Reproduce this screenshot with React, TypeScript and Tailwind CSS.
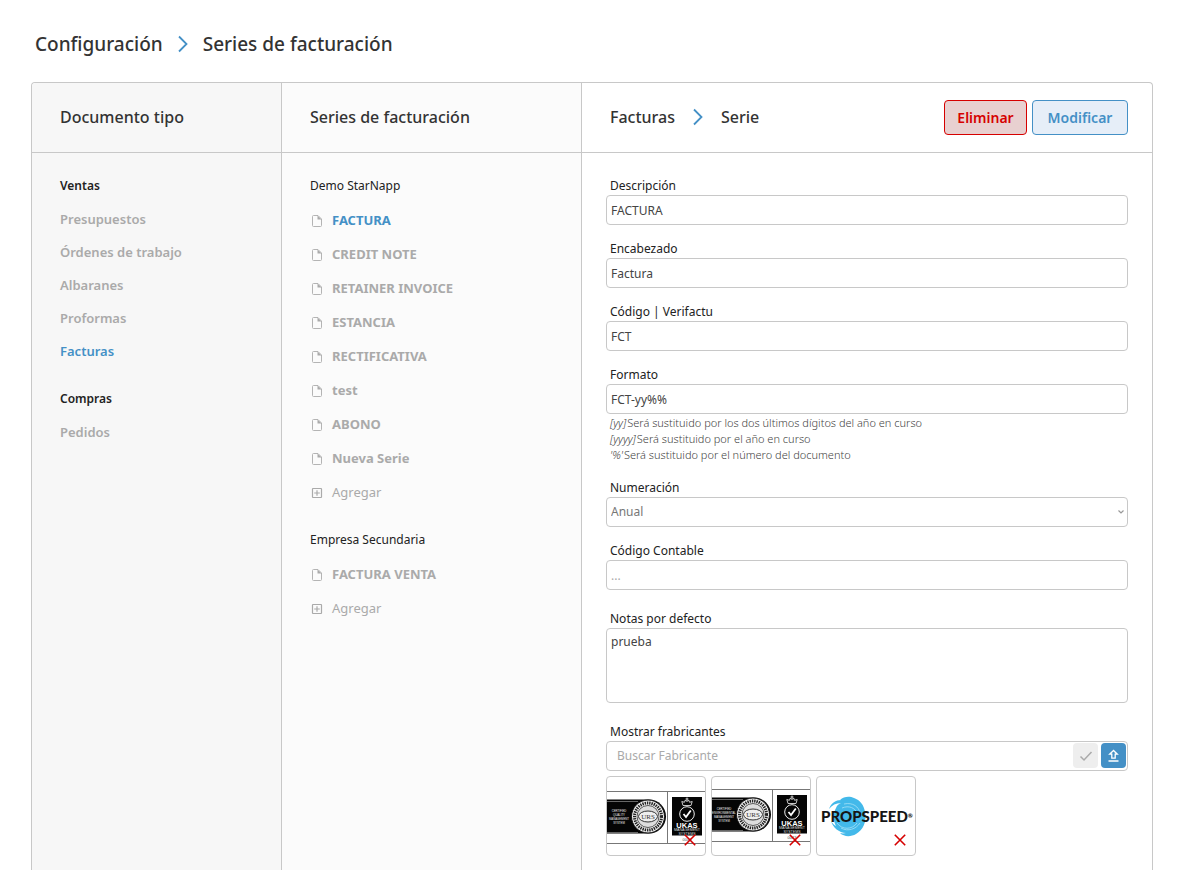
import { useState } from 'react';

interface SeriesGroup {
  company: string;
  series: string[];
}

const documentGroups = [
  { title: 'Ventas', items: ['Presupuestos', 'Órdenes de trabajo', 'Albaranes', 'Proformas', 'Facturas'] },
  { title: 'Compras', items: ['Pedidos'] },
];

const seriesGroups: SeriesGroup[] = [
  {
    company: 'Demo StarNapp',
    series: ['FACTURA', 'CREDIT NOTE', 'RETAINER INVOICE', 'ESTANCIA', 'RECTIFICATIVA', 'test', 'ABONO', 'Nueva Serie'],
  },
  { company: 'Empresa Secundaria', series: ['FACTURA VENTA'] },
];

const inputClass = 'block h-[30px] w-full rounded border border-[#c8c8c8] bg-white px-1 text-xs outline-none placeholder:text-[#aaa]';

const Chevron = ({ className }: { className: string }) => (
  <svg className={className} viewBox="0 0 12 18" fill="none" stroke="#4490c6" strokeWidth="1.8" aria-hidden="true">
    <path d="M2 1.500 9.500 9 2 16.500" />
  </svg>
);

const FileIcon = () => (
  <svg className="size-[14px] shrink-0" viewBox="0 0 14 14" aria-hidden="true">
    <path d="M3.500 1.500h4.500l3.500 3.500v6.500a1 1 0 0 1-1 1h-7a1 1 0 0 1-1-1v-9a1 1 0 0 1 1-1z" fill="none" stroke="#b4b4b4" />
    <path d="M7.500 1.500V5.500h4z" fill="#aaa" />
  </svg>
);

const AddIcon = () => (
  <svg className="size-[14px] shrink-0" viewBox="0 0 14 14" fill="none" stroke="#aaa" aria-hidden="true">
    <rect x="2.500" y="2.500" width="9" height="9" rx="0.500" strokeWidth="1.200" />
    <path d="M7 4.200v5.600M4.200 7h5.600" strokeWidth="1.200" />
  </svg>
);

const CertLogo = ({ lines, top }: { lines: string[]; top: number }) => (
  <svg className="size-full" viewBox="0 0 98 78" role="img" aria-label="URS UKAS">
    <g transform={`translate(0 ${top})`} fontFamily="Liberation Sans, Arial, sans-serif">
      <path d="M0 .5h98M0 52.500h98M60.500 0v53" stroke="#777" fill="none" />
      <path d="M0 8.500h42a17 17 0 0 1 0 34H0z" fill="#050505" />
      <path d="M0 10.500h31M0 41.500h31" stroke="#aaa" strokeWidth="0.600" />
      {lines.map((line, i) => (
        <text key={line} x="12" y={21 + i * 4} fontSize="2.800" fill="#eee" textAnchor="middle">
          {line}
        </text>
      ))}
      <circle cx="41" cy="25.500" r="16.500" fill="#eee" stroke="#111" />
      <circle cx="41" cy="25.500" r="13.500" fill="none" stroke="#222" strokeWidth="3" strokeDasharray="1.400 0.900" />
      <circle cx="41" cy="25.500" r="11" fill="#ddd" stroke="#333" strokeWidth="0.800" />
      <ellipse cx="41" cy="25.500" rx="9.500" ry="5.500" fill="#eee" stroke="#333" />
      <text x="41" y="28" fontSize="7" fontFamily="Liberation Serif, serif" fill="#333" textAnchor="middle">
        URS
      </text>
      <path d="M65 6h30v38.500H65z" fill="#050505" />
      <path
        d="M76 14.500h8l1.200-4-2.600.8-1-2.300-1.600 1.700-1.600-1.700-1 2.300-2.600-.8zM80 6.500V10M78.500 8h3"
        fill="none"
        stroke="#ddd"
        strokeWidth="0.900"
      />
      <circle cx="80" cy="23" r="7.300" fill="none" stroke="#eee" />
      <path d="m76.500 23 2.500 3 4.800-6.500" fill="none" stroke="#fff" strokeWidth="1.800" />
      <text x="80" y="36.500" fontSize="7.500" fontWeight="700" fill="#fff" textAnchor="middle">
        UKAS
      </text>
      <text x="80" y="40.200" fontSize="3.600" fill="#ddd" textAnchor="middle">
        MANAGEMENT
      </text>
      <text x="80" y="43.700" fontSize="3.600" fill="#ddd" textAnchor="middle">
        SYSTEMS
      </text>
      <text x="80" y="50" fontSize="4" fill="#555" textAnchor="middle">
        0043
      </text>
    </g>
  </svg>
);

const PropspeedLogo = () => (
  <svg className="size-full" viewBox="0 0 98 78" role="img" aria-label="Propspeed">
    <g transform="translate(5 0)">
      <path
        d="M18 23c4-4 10-4 14-2 6 2 10 7 11 14 2 10-2 18-9 22-5 3-12 3-16-1 2 .5 4 .5 6 0-7-.5-13-5-15-12 2 3 3 4 5 5-3-5-3-13 0-18 1-3 3-4 5-5-5 0-9 2-12 6 2-6 7-9 12-9z"
        fill="#43b9ea"
      />
      <path
        d="M22 27c9-2 15 3 16 9M20 31c7-3 13 0 15 5M15 46c5 7 15 7 20 0M19 51c7 4 15 1 19-5"
        fill="none"
        stroke="#9bdcf5"
        strokeWidth="0.900"
      />
    </g>
    <text x="4" y="45" fontSize="15" fontWeight="900" fontFamily="Lato, sans-serif" fill="#151515">
      PROPSPEED
      <tspan fontSize="6" dy="-4">
        ®
      </tspan>
    </text>
  </svg>
);

interface FieldProps {
  id: string;
  label: string;
  children: React.ReactNode;
}

const Field = ({ id, label, children }: FieldProps) => (
  <div>
    <label htmlFor={id} className="block pt-[2px] pl-1 text-xs leading-[18px] text-[#222]">
      {label}
    </label>
    {children}
  </div>
);

const manufacturers = [
  { name: 'URS Quality', logo: <CertLogo top={14} lines={['CERTIFIED', 'QUALITY', 'MANAGEMENT', 'SYSTEM']} /> },
  { name: 'URS Environmental', logo: <CertLogo top={12} lines={['CERTIFIED', 'ENVIRONMENTAL', 'MANAGEMENT', 'SYSTEM']} /> },
  { name: 'Propspeed', logo: <PropspeedLogo /> },
];

const App = () => {
  const [docType, setDocType] = useState('Facturas');
  const [serie, setSerie] = useState('FACTURA');

  return (
    <div className="min-h-screen bg-white pr-6 pl-[31px] font-['Noto_Sans',sans-serif] text-[#333]">
      <h1 className="flex h-[82px] items-center gap-[14px] pt-[6px] pl-1 text-[19px] font-medium">
        <span>Configuración</span>
        <Chevron className="h-[18px] w-3" />
        <span>Series de facturación</span>
      </h1>

      <main className="grid min-h-[800px] grid-cols-[250px_300px_1fr] rounded-t border border-b-0 border-[#c8c8c8]">
        <nav className="rounded-tl border-r border-[#c8c8c8] bg-[#f7f7f7]" aria-label="Documento tipo">
          <h2 className="flex h-[70px] items-center border-b border-[#c8c8c8] px-7 pb-[2px] text-base font-medium">Documento tipo</h2>
          <div className="flex flex-col gap-5 px-7 pt-[22px]">
            {documentGroups.map((group) => (
              <section key={group.title}>
                <h3 className="mb-2 pt-[2px] text-xs leading-[18px] font-semibold text-[#222]">{group.title}</h3>
                {group.items.map((item) => (
                  <button
                    key={item}
                    type="button"
                    onClick={() => setDocType(item)}
                    className={`block h-[33px] text-[13px] font-semibold ${item === docType ? 'text-[#4490c6]' : 'text-[#aaa]'}`}
                  >
                    {item}
                  </button>
                ))}
              </section>
            ))}
          </div>
        </nav>

        <section className="border-r border-[#c8c8c8] bg-[#fbfbfb]">
          <h2 className="flex h-[70px] items-center border-b border-[#c8c8c8] px-7 pb-[2px] text-base font-medium">Series de facturación</h2>
          <div className="flex flex-col gap-5 px-7 pt-[23px]">
            {seriesGroups.map((group) => (
              <section key={group.company}>
                <h3 className="mb-2 text-xs leading-5 text-[#222]">{group.company}</h3>
                {group.series.map((item) => (
                  <button
                    key={item}
                    type="button"
                    onClick={() => setSerie(item)}
                    className={`flex h-[34px] items-center gap-2 text-[13px] font-bold ${item === serie ? 'text-[#4490c6]' : 'text-[#aaa]'}`}
                  >
                    <FileIcon />
                    {item}
                  </button>
                ))}
                <button type="button" className="flex h-[34px] items-center gap-2 text-[13px] text-[#aaa]">
                  <AddIcon />
                  Agregar
                </button>
              </section>
            ))}
          </div>
        </section>

        <section>
          <header className="flex h-[70px] items-center justify-between border-b border-[#c8c8c8] pr-6 pl-7">
            <h2 className="flex items-center gap-[17px] pb-[2px] text-base font-medium">
              <span>Facturas</span>
              <Chevron className="h-[18px] w-3" />
              <span>Serie</span>
            </h2>
            <div className="flex gap-[5px] text-sm font-semibold">
              <button type="button" className="h-[35px] w-[83px] rounded border border-[#d60000] bg-[#e8d0d0] text-[#d60000]">
                Eliminar
              </button>
              <button type="button" className="h-[35px] w-24 rounded border border-[#4490c6] bg-[#e6eef8] text-[#4490c6]">
                Modificar
              </button>
            </div>
          </header>

          <form className="px-6 pt-[22px]">
            <div className="flex flex-col gap-[13px]">
              <Field id="descripcion" label="Descripción">
                <input id="descripcion" className={`${inputClass} text-[#444]`} defaultValue="FACTURA" />
              </Field>
              <Field id="encabezado" label="Encabezado">
                <input id="encabezado" className={`${inputClass} text-[#444]`} defaultValue="Factura" />
              </Field>
              <Field id="codigo" label="Código | Verifactu">
                <input id="codigo" className={`${inputClass} text-[#444]`} defaultValue="FCT" />
              </Field>
              <Field id="formato" label="Formato">
                <input id="formato" className={`${inputClass} text-[#444]`} defaultValue="FCT-yy%%" />
                <div className="pt-px pb-px pl-1 text-[11px] leading-4 font-light text-[#444]">
                  <p>
                    <em className="mr-px">[yy]</em>Será sustituido por los dos últimos dígitos del año en curso
                  </p>
                  <p>
                    <em className="mr-px">[yyyy]</em>Será sustituido por el año en curso
                  </p>
                  <p>
                    <em className="mr-px">'%'</em>Será sustituido por el número del documento
                  </p>
                </div>
              </Field>
              <Field id="numeracion" label="Numeración">
                <div className="relative">
                  <select id="numeracion" className={`${inputClass} appearance-none text-[#777]`} defaultValue="Anual">
                    <option>Anual</option>
                    <option>Mensual</option>
                  </select>
                  <svg
                    className="pointer-events-none absolute top-[11px] right-1 h-2 w-[6px]"
                    viewBox="0 0 6 8"
                    fill="none"
                    stroke="#999"
                    strokeWidth="1.200"
                    aria-hidden="true"
                  >
                    <path d="m.5 2.500 2.500 2.500 2.500-2.500" />
                  </svg>
                </div>
              </Field>
              <Field id="contable" label="Código Contable">
                <input id="contable" className={`${inputClass} text-[#444]`} placeholder="..." />
              </Field>
            </div>

            <div className="mt-[18px] flex flex-col gap-[18px]">
              <Field id="notas" label="Notas por defecto">
                <textarea
                  id="notas"
                  className="block h-[75px] w-full resize-none rounded border border-[#c8c8c8] px-1 py-[5px] text-xs text-[#444] outline-none"
                  defaultValue="prueba"
                />
              </Field>
              <Field id="fabricante" label="Mostrar frabricantes">
                <div className="flex h-[30px] items-center gap-[3px] rounded border border-[#c8c8c8] pr-px pb-px pl-[10px]">
                  <input
                    id="fabricante"
                    className="min-w-0 flex-1 text-xs outline-none placeholder:text-[#aaa]"
                    placeholder="Buscar Fabricante"
                  />
                  <button type="button" aria-label="Confirmar" className="flex size-[25px] items-center justify-center rounded bg-[#eee]">
                    <svg className="h-3 w-[14px]" viewBox="0 0 14 12" fill="none" stroke="#aaa" strokeWidth="1.500">
                      <path d="m1.500 6.500 3.500 3.500 7.500-8" />
                    </svg>
                  </button>
                  <button type="button" aria-label="Subir" className="flex size-[25px] items-center justify-center rounded bg-[#4490c6]">
                    <svg className="size-[13px]" viewBox="0 0 13 13" fill="none" stroke="#fff" strokeWidth="1.300">
                      <path d="M6.500 1.500 2.700 5.200h2.100v3.900h3.400V5.200h2.100zM1.500 12h10" />
                    </svg>
                  </button>
                </div>
              </Field>
            </div>

            <ul className="mt-[5px] flex gap-[5px] pb-6">
              {manufacturers.map((item) => (
                <li key={item.name} className="relative h-20 w-[100px] overflow-hidden rounded border border-[#c8c8c8]">
                  {item.logo}
                  <button type="button" aria-label={`Quitar ${item.name}`} className="absolute right-[9px] bottom-[9px]">
                    <svg className="size-3" viewBox="0 0 12 12" fill="none" stroke="#d60000" strokeWidth="1.600">
                      <path d="m.8.800 10.400 10.400M11.200.8.800 11.200" />
                    </svg>
                  </button>
                </li>
              ))}
            </ul>
          </form>
        </section>
      </main>
    </div>
  );
};

export default App;
